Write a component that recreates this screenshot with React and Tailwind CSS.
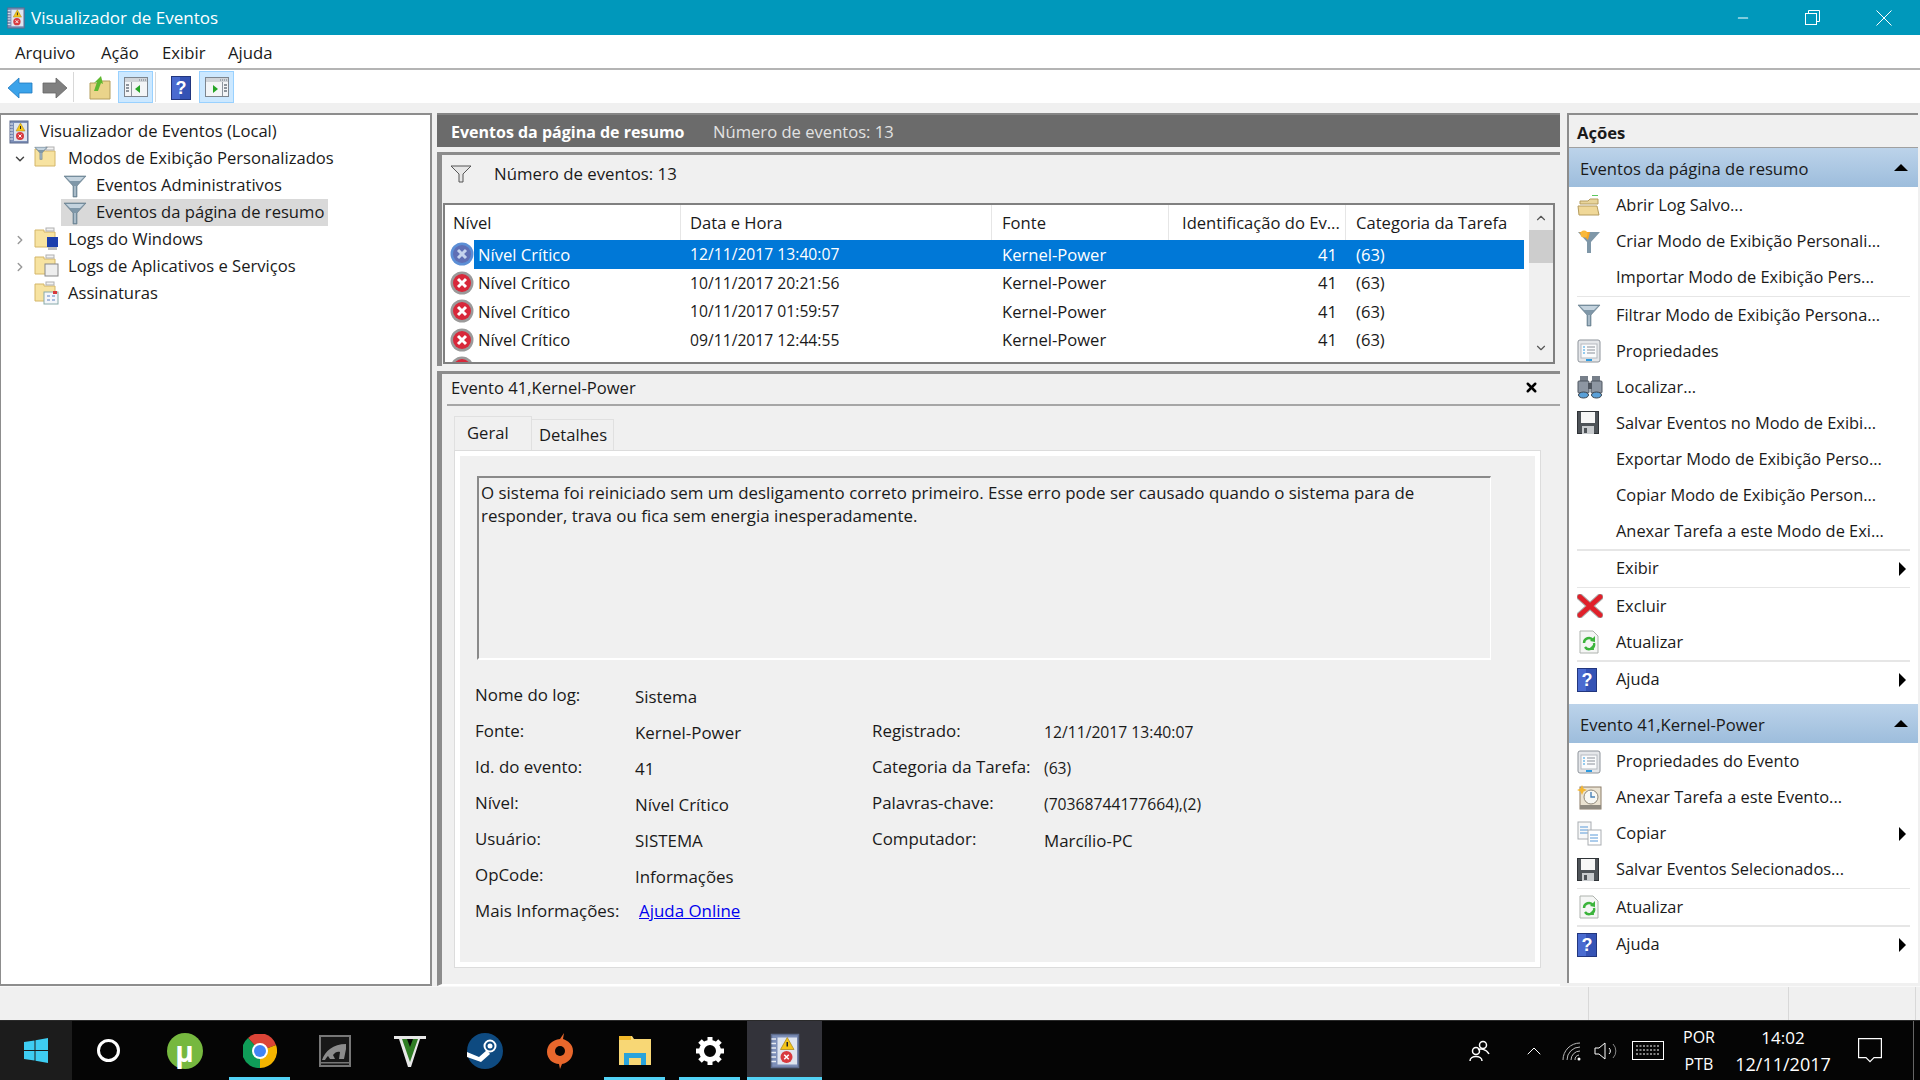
import { ChevronDown, ChevronRight, ChevronUp, X, Minus } from 'lucide-react';

function EventIcon({ size = 22 }) {
    return (
        <svg width={size} height={size} viewBox="0 0 24 24">
            <rect x="3" y="1" width="18" height="22" fill="#7d8fb8" stroke="#5d6b8c" />
            <rect x="7" y="3" width="13" height="18" fill="#dfe5ef" />
            <path d="M3 4h3M3 7h3M3 10h3M3 13h3M3 16h3M3 19h3" stroke="#e8ecf2" strokeWidth="1" />
            <polygon points="13.5,3 18,11 9,11" fill="#f5c518" stroke="#a8861a" strokeWidth="0.5" />
            <rect x="13" y="6" width="1" height="3" fill="#222" />
            <circle cx="13" cy="16" r="4" fill="#d83a3f" />
            <path d="M11.5 14.5l3 3M14.5 14.5l-3 3" stroke="#fff" strokeWidth="1" />
        </svg>
    );
}

function FolderIcon({ children }) {
    return (
        <svg width="25" height="25" viewBox="0 0 25 25" className="shrink-0">
            <path d="M1 3h9v2h11v15H1z" fill="#f7e3a1" stroke="#d4b668" />
            <rect x="12" y="1" width="8" height="3" fill="#f2f2f2" stroke="#b0b0b0" />
            {children}
        </svg>
    );
}

function Funnel({ size = 24, className = '' }) {
    return (
        <svg width={size} height={size} viewBox="0 0 24 24" className={`shrink-0 ${className}`}>
            <polygon points="1,2 23,2 14,12 14,23 10,23 10,12" fill="#7f97a8" stroke="#5f7585" strokeWidth="0.6" />
            <polygon points="3,3 21,3 17,7 7,7" fill="#c4d3de" />
            <rect x="11" y="12" width="2" height="10" fill="#a9bbc8" />
        </svg>
    );
}

function ArrowIcon({ fill, dir }) {
    const pts = dir === 'left' ? '1,12 12,2 12,7 25,7 25,17 12,17 12,22' : '25,12 14,2 14,7 1,7 1,17 14,17 14,22';
    return (
        <svg width="26" height="24" viewBox="0 0 26 24" className="mt-[2px] shrink-0">
            <polygon points={pts} fill={fill} stroke={fill === '#808080' ? '#666' : '#1f78bf'} strokeWidth="0.8" />
        </svg>
    );
}

function ConsoleIcon({ flip }) {
    return (
        <svg width="24" height="20" viewBox="0 0 24 20">
            <rect x="0.5" y="0.5" width="23" height="19" fill="#f3f5f7" stroke="#7d858e" />
            <rect x="1" y="1" width="22" height="4" fill="#d0d4d9" />
            <path d="M15 3h1M17 3h1M19 3h1M21 3h1" stroke="#6d7680" />
            <rect x={flip ? 17 : 7} y="5" width="1" height="14" fill="#8d959e" />
            <path d={flip ? 'M19 8h3M19 11h3M19 14h3' : 'M2 8h3M2 11h3M2 14h3'} stroke="#6d7680" strokeWidth="1.4" />
            <polygon points={flip ? '8,8 13,12 8,16' : '16,8 11,12 16,16'} fill="#27a527" />
        </svg>
    );
}

function HelpIcon({ w = 20, h = 24 }) {
    return (
        <svg width={w} height={h} viewBox="0 0 20 24" className="shrink-0">
            <rect x="0.5" y="0.5" width="19" height="23" fill="#3553b5" stroke="#22367e" />
            <rect x="1" y="1" width="8" height="22" fill="#4a6bd0" />
            <text x="10" y="18" textAnchor="middle" fontSize="18" fontWeight="700" fill="#fff" fontFamily="Liberation Sans, sans-serif">?</text>
        </svg>
    );
}

function ErrorIcon({ selected }) {
    return (
        <svg width="24" height="24" viewBox="0 0 24 24" className="shrink-0">
            <circle cx="12" cy="12" r="11.5" fill={selected ? '#5c8fd6' : '#9a9a9a'} />
            <circle cx="12" cy="12" r="9" fill={selected ? '#5f6fb5' : '#d8283a'} />
            <path d="M8 8l8 8M16 8l-8 8" stroke={selected ? '#c5d3ee' : '#fff'} strokeWidth="3" />
        </svg>
    );
}

function OpenFolderIcon() {
    return (
        <svg width="24" height="24" viewBox="0 0 24 24">
            <rect x="15" y="1" width="6" height="1" fill="#5ec75e" />
            <path d="M3 7h8l2-2h8v5H3z" fill="#e8d49a" stroke="#b59c5e" />
            <path d="M1 12h19l2 9H2z" fill="#f0d898" stroke="#b59c5e" />
        </svg>
    );
}

function PropsIcon() {
    return (
        <svg width="24" height="24" viewBox="0 0 24 24">
            <rect x="1" y="1" width="22" height="22" rx="2" fill="#e5e7ea" stroke="#8e949b" />
            <rect x="4" y="5" width="16" height="14" fill="#fafbfc" stroke="#b5bac0" />
            <path d="M6 8h2M6 11h2M6 14h2" stroke="#2f9be0" />
            <path d="M10 8h8M10 11h8M10 14h8" stroke="#8a9099" />
            <rect x="9" y="20" width="6" height="2" fill="#2f9be0" />
        </svg>
    );
}

function BinocularsIcon() {
    return (
        <svg width="26" height="24" viewBox="0 0 26 24">
            <rect x="3" y="1" width="8" height="6" fill="#777f8a" />
            <rect x="15" y="1" width="8" height="6" fill="#777f8a" />
            <rect x="1" y="6" width="11" height="12" rx="1" fill="#8d96a2" stroke="#4f5660" />
            <rect x="14" y="6" width="11" height="12" rx="1" fill="#8d96a2" stroke="#4f5660" />
            <rect x="11" y="8" width="4" height="6" fill="#4f5660" />
            <ellipse cx="6.5" cy="20" rx="5" ry="3" fill="#5aa0d8" stroke="#3b4550" />
            <ellipse cx="19.5" cy="20" rx="5" ry="3" fill="#5aa0d8" stroke="#3b4550" />
        </svg>
    );
}

function FloppyIcon() {
    return (
        <svg width="22" height="24" viewBox="0 0 22 24">
            <rect x="0.5" y="0.5" width="21" height="22" fill="#4e5358" stroke="#2f3337" />
            <rect x="4" y="1" width="14" height="11" fill="#f7f7f7" />
            <rect x="5" y="15" width="12" height="8" fill="#c8cbce" />
            <rect x="7" y="17" width="3" height="5" fill="#4e5358" />
        </svg>
    );
}

function RedXIcon() {
    return (
        <svg width="26" height="24" viewBox="0 0 26 24">
            <path d="M3 3l20 18M23 3L3 21" stroke="#aaa" strokeWidth="7" strokeLinecap="round" />
            <path d="M3 3l20 18M23 3L3 21" stroke="#e0202a" strokeWidth="5" strokeLinecap="round" />
        </svg>
    );
}

function RefreshIcon() {
    return (
        <svg width="24" height="24" viewBox="0 0 24 24">
            <path d="M3 1h13l5 5v17H3z" fill="#f5f6f5" stroke="#aeb3ae" />
            <path d="M7 13a5 5 0 0 1 9-3M17 13a5 5 0 0 1-9 4" fill="none" stroke="#3cb43c" strokeWidth="2.4" />
            <polygon points="18,6 18,12 13,11" fill="#3cb43c" />
            <polygon points="11,20 17,20 16,15" fill="#3cb43c" />
        </svg>
    );
}

function TaskClockIcon() {
    return (
        <svg width="26" height="26" viewBox="0 0 26 26">
            <rect x="3" y="2" width="21" height="22" fill="#ebe3d2" stroke="#8b7d68" />
            <rect x="3" y="20" width="21" height="4" fill="#8f8a80" />
            <circle cx="14" cy="12" r="7" fill="#f8f8f4" stroke="#90897a" />
            <path d="M14 7v5h4" fill="none" stroke="#4a82b8" strokeWidth="1.4" />
            <polygon points="5,0 6.5,3.5 10,5 6.5,6.5 5,10 3.5,6.5 0,5 3.5,3.5" fill="#f5b731" />
        </svg>
    );
}

function CopyIcon() {
    return (
        <svg width="26" height="26" viewBox="0 0 26 26">
            <rect x="1" y="1" width="13" height="17" fill="#f7f8f9" stroke="#a9adb2" />
            <path d="M3 6h8M3 9h8M3 12h8" stroke="#5a9ad8" />
            <rect x="11" y="9" width="13" height="15" fill="#fff" stroke="#a9adb2" />
            <path d="M13 14h8M13 17h8M13 20h8" stroke="#5a9ad8" />
        </svg>
    );
}

function OrangeFunnelIcon() {
    return (
        <svg width="24" height="24" viewBox="0 0 24 24">
            <polygon points="1,2 23,2 14,12 14,23 10,23 10,12" fill="#7f97a8" />
            <polygon points="2,2 13,2 11,10" fill="#f5a623" />
            <circle cx="7" cy="4" r="3.5" fill="#f9b93a" />
        </svg>
    );
}

const actionsOne = [
    { label: 'Abrir Log Salvo...', icon: <OpenFolderIcon /> },
    { label: 'Criar Modo de Exibição Personali...', icon: <OrangeFunnelIcon /> },
    { label: 'Importar Modo de Exibição Pers...', sep: true },
    { label: 'Filtrar Modo de Exibição Persona...', icon: <Funnel /> },
    { label: 'Propriedades', icon: <PropsIcon /> },
    { label: 'Localizar...', icon: <BinocularsIcon /> },
    { label: 'Salvar Eventos no Modo de Exibi...', icon: <FloppyIcon /> },
    { label: 'Exportar Modo de Exibição Perso...' },
    { label: 'Copiar Modo de Exibição Person...' },
    { label: 'Anexar Tarefa a este Modo de Exi...', sep: true },
    { label: 'Exibir', arrow: true, sep: true },
    { label: 'Excluir', icon: <RedXIcon /> },
    { label: 'Atualizar', icon: <RefreshIcon />, sep: true },
    { label: 'Ajuda', icon: <HelpIcon />, arrow: true },
];

const actionsTwo = [
    { label: 'Propriedades do Evento', icon: <PropsIcon /> },
    { label: 'Anexar Tarefa a este Evento...', icon: <TaskClockIcon /> },
    { label: 'Copiar', icon: <CopyIcon />, arrow: true },
    { label: 'Salvar Eventos Selecionados...', icon: <FloppyIcon />, sep: true },
    { label: 'Atualizar', icon: <RefreshIcon />, sep: true },
    { label: 'Ajuda', icon: <HelpIcon />, arrow: true },
];

function ActionItem({ item }) {
    return (
        <>
            <div className="flex h-[36px] items-center pl-[8px] pr-[12px] text-[16.4px]">
                <div className="flex w-[39px] shrink-0 items-center">{item.icon}</div>
                <span className="flex-1 whitespace-nowrap">{item.label}</span>
                {item.arrow && <span className="h-0 w-0 border-y-[7px] border-l-[7px] border-y-transparent border-l-black" />}
            </div>
            {item.sep && <div className="mx-[8px] h-[1.5px] w-[333px] bg-[#e6e6e6]" />}
        </>
    );
}

function SectionHeader({ title }) {
    return (
        <div className="flex h-[38.5px] items-center justify-between bg-gradient-to-b from-[#bcd3ea] to-[#9dbddc] pl-[11px] pr-[10px] pt-[5px]">
            <span>{title}</span>
            <span className="mb-[5px] h-0 w-0 border-x-[7px] border-b-[7px] border-x-transparent border-b-black" />
        </div>
    );
}

function TreeRow({ indent, chevron, icon, label, selected }) {
    return (
        <div className="flex h-[27px] items-center" style={{ paddingLeft: indent }}>
            {chevron === 'down' && <ChevronDown size={14} strokeWidth={2.5} className="mr-[5px] text-[#444]" />}
            {chevron === 'right' && <ChevronRight size={14} strokeWidth={2.5} className="mr-[5px] text-[#999]" />}
            <div className={`flex h-[27px] items-center pl-[2px] pr-[4px] ${selected ? 'bg-[#d9d9d9]' : ''}`}>
                {icon}
                <span className="ml-[9px] whitespace-nowrap">{label}</span>
            </div>
        </div>
    );
}

function EventRow({ date, selected }) {
    return (
        <div className="flex h-[28.5px] items-center">
            <div className="flex h-full w-[29px] shrink-0 items-center pl-[5px]">
                <ErrorIcon selected={selected} />
            </div>
            <div className={`flex h-full flex-1 items-center pt-[2px] ${selected ? 'bg-[#0078d7] text-white' : ''}`}>
                <span className="w-[207px] pl-[4px]">Nível Crítico</span>
                <span className="w-[311px] pl-[9px] text-[15.7px]">{date}</span>
                <span className="w-[177px] pl-[10px]">Kernel-Power</span>
                <span className="w-[177px] pr-[9px] text-right">41</span>
                <span className="w-[149px] pl-[10px]">(63)</span>
            </div>
        </div>
    );
}

const details = [
    ['Nome do log:', 'Sistema', '', ''],
    ['Fonte:', 'Kernel-Power', 'Registrado:', '12/11/2017 13:40:07'],
    ['Id. do evento:', '41', 'Categoria da Tarefa:', '(63)'],
    ['Nível:', 'Nível Crítico', 'Palavras-chave:', '(70368744177664),(2)'],
    ['Usuário:', 'SISTEMA', 'Computador:', 'Marcílio-PC'],
    ['OpCode:', 'Informações', '', ''],
];

function TaskIcon({ children, active, underline }) {
    return (
        <div className={`relative flex h-full w-[75px] shrink-0 items-center justify-center ${active ? 'bg-[#33333a]' : ''}`}>
            {children}
            {underline && <div className={`absolute bottom-0 h-[3px] bg-[#52d2f5] ${active ? 'inset-x-0' : 'inset-x-[7px]'}`} />}
        </div>
    );
}

export default function App() {
    return (
        <div className="flex h-screen w-[1920px] flex-col overflow-hidden bg-[#f0f0f0] font-['Open_Sans','Noto_Sans',sans-serif] text-[16.6px] text-[#1a1a1a]">
            {/* title bar */}
            <div className="flex h-[35px] shrink-0 items-center bg-[#0098bb] pl-[5px] text-[17px] text-white">
                <EventIcon />
                <span className="ml-[4px]">Visualizador de Eventos</span>
                <div className="ml-auto flex items-center pr-[28px]">
                    <Minus size={16} strokeWidth={1.6} className="mr-[54px]" />
                    <svg width="15" height="15" viewBox="0 0 15 15" className="mr-[56px]" fill="none" stroke="#fff">
                        <rect x="0.5" y="3.5" width="11" height="11" />
                        <path d="M3.5 3V0.5h11v11H12" />
                    </svg>
                    <svg width="16" height="16" viewBox="0 0 16 16" stroke="#fff"><path d="M0.5 0.5l15 15M15.5 0.5l-15 15" /></svg>
                </div>
            </div>

            {/* menu */}
            <div className="flex h-[35px] shrink-0 items-center border-b-2 border-[#b4b4b4] bg-white pl-[15px] pt-[2px] text-[16.7px]">
                <span className="w-[86px]">Arquivo</span>
                <span className="w-[61px]">Ação</span>
                <span className="w-[66px]">Exibir</span>
                <span>Ajuda</span>
            </div>

            {/* toolbar */}
            <div className="flex h-[33px] shrink-0 items-center bg-white pl-[7px]">
                <ArrowIcon fill="#3ba3ea" dir="left" />
                <div className="ml-[9px]"><ArrowIcon fill="#808080" dir="right" /></div>
                <div className="ml-[5px] h-[30px] w-px bg-[#d8d8d8]" />
                <svg width="22" height="26" viewBox="0 0 22 26" className="ml-[15px] mt-[2px]">
                    <path d="M1 8h9V6h11v18H1z" fill="#ead48b" stroke="#b49e5c" />
                    <path d="M5 16l3-9-3 1 7-7 2 8-2-1-3 8z" fill="#5fb82f" />
                </svg>
                <div className="ml-[7px] flex h-[32px] w-[35px] items-center justify-center border border-[#99d1ff] bg-[#cce8ff]"><ConsoleIcon /></div>
                <div className="ml-[2px] h-[30px] w-px bg-[#d8d8d8]" />
                <div className="ml-[15px] mt-[2px]"><HelpIcon /></div>
                <div className="ml-[8px] flex h-[32px] w-[35px] items-center justify-center border border-[#99d1ff] bg-[#cce8ff]"><ConsoleIcon flip /></div>
            </div>

            {/* panes */}
            <div className="flex min-h-0 flex-1 pt-[10px]">
                <div className="w-[432px] shrink-0 border-y-2 border-l border-r-2 border-[#8d8d8d] bg-white pt-[3px]">
                    <TreeRow indent={4} icon={<EventIcon size={24} />} label="Visualizador de Eventos (Local)" />
                    <TreeRow indent={12} chevron="down" icon={<FolderIcon><Funnel size={14} /></FolderIcon>} label="Modos de Exibição Personalizados" />
                    <TreeRow indent={60} icon={<Funnel />} label="Eventos Administrativos" />
                    <TreeRow indent={60} icon={<Funnel />} label="Eventos da página de resumo" selected />
                    <TreeRow indent={12} chevron="right" icon={<FolderIcon><rect x="13" y="10" width="11" height="10" fill="#1c3fae" /><rect x="14" y="20" width="9" height="3" fill="#bbb" /></FolderIcon>} label="Logs do Windows" />
                    <TreeRow indent={12} chevron="right" icon={<FolderIcon><rect x="11" y="10" width="13" height="12" fill="#eee" stroke="#888" /></FolderIcon>} label="Logs de Aplicativos e Serviços" />
                    <TreeRow indent={31} icon={<FolderIcon><rect x="10" y="11" width="14" height="12" fill="#f4f6fa" stroke="#8aa" /><path d="M13 15h3M18 15h3M13 19h3M18 19h3" stroke="#5a80c0" /><rect x="19" y="10" width="4" height="3" fill="#d8383c" /></FolderIcon>} label="Assinaturas" />
                </div>

                <div className="ml-[5px] flex w-[1123px] shrink-0 flex-col">
                    <div className="flex h-[34px] shrink-0 items-center border-t-2 border-[#858585] bg-[#6b6b6b] pl-[14px] pt-[2px]">
                        <span className="w-[262px] text-[16px] font-bold text-white">Eventos da página de resumo</span>
                        <span className="text-[#e2e2e2]">Número de eventos: 13</span>
                    </div>

                    <div className="mt-[5px] h-[214px] shrink-0 border-l-[5px] border-t-[3px] border-[#8c8c8c] pl-[1px]">
                        <div className="flex h-[48px] items-start pl-[7px] pt-[10px]">
                            <svg width="22" height="18" viewBox="0 0 22 18" fill="none" stroke="#555">
                                <path d="M1 1h20l-8 8v8h-4V9z" fill="#e6e6e6" />
                            </svg>
                            <span className="ml-[22px] text-[16.8px] leading-[18px]">Número de eventos: 13</span>
                        </div>
                        <div className="flex h-[161px] w-[1112px] border-2 border-[#808080] bg-white">
                            <div className="w-[1079px] shrink-0 overflow-hidden">
                                <div className="flex h-[35px] items-center">
                                    <span className="flex h-full w-[236px] items-center border-r border-[#e6e6e6] pl-[8px] pt-[2px]">Nível</span>
                                    <span className="flex h-full w-[311px] items-center border-r border-[#e6e6e6] pl-[9px] pt-[2px]">Data e Hora</span>
                                    <span className="flex h-full w-[177px] items-center border-r border-[#e6e6e6] pl-[10px] pt-[2px]">Fonte</span>
                                    <span className="flex h-full w-[177px] items-center border-r border-[#e6e6e6] pl-[13px] pt-[2px] whitespace-nowrap">Identificação do Ev...</span>
                                    <span className="flex h-full w-[178px] items-center pl-[10px] pt-[2px]">Categoria da Tarefa</span>
                                </div>
                                <EventRow date="12/11/2017 13:40:07" selected />
                                <EventRow date="10/11/2017 20:21:56" />
                                <EventRow date="10/11/2017 01:59:57" />
                                <EventRow date="09/11/2017 12:44:55" />
                                <div className="pl-[5px] pt-[2px]"><ErrorIcon /></div>
                            </div>
                            <div className="ml-[5px] flex w-[24px] flex-col items-center bg-[#f0f0f0]">
                                <ChevronUp size={14} className="mt-[6px] text-[#555]" />
                                <div className="mt-[5px] h-[33px] w-full bg-[#cdcdcd]" />
                                <ChevronDown size={14} className="mt-[78px] text-[#555]" />
                            </div>
                        </div>
                    </div>

                    <div className="mt-[5px] flex min-h-0 flex-1 flex-col border-b-2 border-l-[5px] border-t-[3px] border-b-white border-l-[#8c8c8c] border-t-[#8c8c8c] pl-[5px]">
                        <div className="flex h-[32px] shrink-0 items-center justify-between border-b-2 border-[#a6a6a6] pl-[4px] pr-[16px]">
                            <span className="pb-[2px]">Evento 41,Kernel-Power</span>
                            <X size={15} strokeWidth={4} className="mb-[3px] mr-[5px] text-black" />
                        </div>
                        <div className="ml-[7px] mt-[10px] flex h-[34px] shrink-0 items-end">
                            <div className="flex h-[34px] w-[78px] items-center border-x border-t border-[#e0e0e0] pl-[12px]">Geral</div>
                            <div className="flex h-[31px] w-[82px] items-center border-r border-t border-[#e0e0e0] pl-[7px]">Detalhes</div>
                        </div>
                        <div className="ml-[7px] h-[518px] w-[1087px] shrink-0 border border-[#dcdcdc]">
                            <div className="h-full border-[5px] border-white pl-[17px] pt-[20px] text-[16.9px]">
                                <div className="h-[184px] w-[1014px] border-y-2 border-l-2 border-r border-b-white border-l-[#8a8a8a] border-r-white border-t-[#8a8a8a] px-[2px] pt-[3px] leading-[23px]">
                                    O sistema foi reiniciado sem um desligamento correto primeiro. Esse erro pode ser causado quando o sistema para de<br />
                                    responder, trava ou fica sem energia inesperadamente.
                                </div>
                                <div className="ml-[-2px] mt-[17px] grid grid-cols-[160px_237px_172px_1fr]">
                                    {details.flat().map((t, i) => (
                                        <div key={i} className={`flex h-[36px] items-center whitespace-nowrap ${i % 2 ? 'pt-[3px]' : ''} ${t.includes('(') || t.includes('/') ? 'text-[15.7px]' : ''}`}>{t}</div>
                                    ))}
                                    <div className="flex h-[36px] items-center">Mais Informações:</div>
                                    <div className="col-span-3 flex h-[36px] items-center pl-[4px]">
                                        <a href="#" className="text-[#0000ee] underline">Ajuda Online</a>
                                    </div>
                                </div>
                            </div>
                        </div>
                    </div>
                </div>

                <div className="ml-[7px] h-[870px] w-[351px] shrink-0 border-l-2 border-t-2 border-[#8d8d8d] bg-white">
                    <div className="flex h-[33px] items-center border-b border-[#a0a0a0] bg-[#f0f0f0] pl-[8px] pt-[4px] font-bold">Ações</div>
                    <SectionHeader title="Eventos da página de resumo" />
                    <div className="h-px" />
                    {actionsOne.map((a) => <ActionItem key={a.label} item={a} />)}
                    <div className="h-[6.5px]" />
                    <SectionHeader title="Evento 41,Kernel-Power" />
                    <div className="h-px" />
                    {actionsTwo.map((a) => <ActionItem key={a.label} item={a} />)}
                </div>
            </div>

            {/* status bar */}
            <div className="flex h-[34px] shrink-0 border-t border-[#f8f8f8]">
                <div className="w-[1589px] border-r border-[#d8d8d8]" />
                <div className="w-[200px] border-r border-[#d8d8d8]" />
                <div className="w-[127px] border-r border-[#d8d8d8]" />
            </div>

            {/* taskbar */}
            <div className="flex h-[60px] shrink-0 items-center border-t border-[#2a2a2a] bg-[#050505] text-white">
                <div className="flex h-full w-[72px] items-center justify-center bg-[#1c1c1c]">
                    <svg width="24" height="25" viewBox="0 0 24 25" fill="#3ecdf2">
                        <polygon points="0,4 10.5,2.5 10.5,12 0,12" />
                        <polygon points="11.5,2.3 24,0 24,12 11.5,12" />
                        <polygon points="0,13 10.5,13 10.5,22.5 0,21" />
                        <polygon points="11.5,13 24,13 24,25 11.5,22.8" />
                    </svg>
                </div>
                <div className="flex h-full w-[75px] items-center justify-center pr-[3px]">
                    <div className="h-[23px] w-[23px] rounded-full border-[3px] border-white" />
                </div>
                <TaskIcon>
                    <div className="flex h-[36px] w-[36px] items-center justify-center rounded-full bg-[#76b83f] text-[28px] font-bold leading-none text-white">µ</div>
                </TaskIcon>
                <TaskIcon underline>
                    <svg width="34" height="34" viewBox="0 0 34 34">
                        <path d="M17 17L5 4A17 17 0 0 1 33 11z" fill="#db4437" />
                        <path d="M17 17L33 11A17 17 0 0 1 17 34z" fill="#f4b400" />
                        <path d="M17 17L17 34A17 17 0 0 1 5 4z" fill="#0f9d58" />
                        <circle cx="17" cy="17" r="8" fill="#fff" />
                        <circle cx="17" cy="17" r="6" fill="#4285f4" />
                    </svg>
                </TaskIcon>
                <TaskIcon>
                    <svg width="32" height="32" viewBox="0 0 32 32">
                        <rect x="1" y="1" width="30" height="30" fill="#181818" stroke="#777" strokeWidth="2" />
                        <rect x="1" y="27" width="30" height="1.5" fill="#777" />
                        <path d="M3 25C6 16 14 9 27 9v5l-2 10h-5l1-7c-2-1-5 0-7 3l2 4h-5l-2-3c-1 1-2 2-3 4z" fill="#8c8c8c" />
                    </svg>
                </TaskIcon>
                <TaskIcon>
                    <svg width="34" height="34" viewBox="0 0 34 34">
                        <polygon points="1,2 33,2 33,5 27,5 18,33 15,33 6,5 1,5" fill="#e8e8e8" />
                        <polygon points="9,5 25,5 17,28" fill="#2f7d24" />
                        <polygon points="14,5 20,5 17,13" fill="#050505" />
                    </svg>
                </TaskIcon>
                <TaskIcon>
                    <svg width="36" height="36" viewBox="0 0 36 36">
                        <circle cx="18" cy="18" r="18" fill="#0e4a80" />
                        <circle cx="23" cy="13" r="5.5" fill="none" stroke="#fff" strokeWidth="2" />
                        <circle cx="23" cy="13" r="2.5" fill="#fff" />
                        <path d="M0 19l12 5 8-7 3 4-9 8-14-5z" fill="#fff" />
                    </svg>
                </TaskIcon>
                <TaskIcon>
                    <svg width="28" height="36" viewBox="0 0 28 36">
                        <path d="M14 6C6 7 1 12 1 19s6 12 12 12l1 5 2-5c6-1 11-6 11-13S22 8 17 6l1-6z" fill="#e8672c" />
                        <circle cx="14" cy="18" r="5" fill="#050505" />
                    </svg>
                </TaskIcon>
                <TaskIcon underline>
                    <svg width="34" height="30" viewBox="0 0 34 30">
                        <path d="M1 0h13l2 3h17v26H1z" fill="#f8d775" />
                        <rect x="1" y="0" width="12" height="4" fill="#f2b92b" />
                        <path d="M6 29V17h22v12h-5v-7H11v7z" fill="#29a3dc" />
                    </svg>
                </TaskIcon>
                <TaskIcon underline>
                    <svg width="28" height="28" viewBox="0 0 28 28">
                        <circle cx="14" cy="14" r="8.5" fill="none" stroke="#fff" strokeWidth="5" />
                        <path d="M14 0v6M14 22v6M0 14h6M22 14h6M4 4l4 4M20 20l4 4M24 4l-4 4M8 20l-4 4" stroke="#fff" strokeWidth="5" />
                    </svg>
                </TaskIcon>
                <TaskIcon active underline>
                    <EventIcon size={36} />
                </TaskIcon>

                <div className="ml-auto flex h-full items-center">
                    <svg width="22" height="22" viewBox="0 0 22 22" fill="none" stroke="#fff" strokeWidth="1.5">
                        <circle cx="14" cy="5" r="3.5" /><path d="M9 10c2-1.5 8-1.5 11 4" />
                        <circle cx="7" cy="11" r="3.5" /><path d="M1 21c0-6 12-6 12 0" />
                    </svg>
                    <ChevronUp size={24} strokeWidth={1} className="ml-[31px]" />
                    <svg width="20" height="20" viewBox="0 0 20 20" fill="none" stroke="#bbb" strokeWidth="1" className="ml-[16px]">
                        <path d="M1 19A17 17 0 0 1 18 2M5 19A13 13 0 0 1 18 6M9 19A9 9 0 0 1 18 10M13 19a5 5 0 0 1 4-5" />
                        <circle cx="17" cy="18" r="1.5" fill="#fff" stroke="none" />
                    </svg>
                    <svg width="24" height="20" viewBox="0 0 24 20" fill="none" stroke="#fff" strokeWidth="1" className="ml-[12px]">
                        <path d="M1 7h4l6-5v16l-6-5H1z" /><path d="M15 7a4 4 0 0 1 0 6" /><path d="M19 3a10 10 0 0 1 0 14" stroke="#888" />
                    </svg>
                    <svg width="32" height="19" viewBox="0 0 32 19" fill="none" stroke="#fff" className="ml-[14px]">
                        <rect x="0.5" y="0.5" width="31" height="18" />
                        <path d="M4 5h24M4 9h24M4 13h24" strokeDasharray="2 1.5" />
                    </svg>
                    <div className="ml-[17px] flex w-[36px] flex-col items-center gap-[8px] text-[16px] leading-[19px]">
                        <span>POR</span><span>PTB</span>
                    </div>
                    <div className="ml-[16px] flex w-[100px] flex-col items-center gap-[8px] text-[17px] leading-[19px]">
                        <span>14:02</span><span className="text-[18px]">12/11/2017</span>
                    </div>
                    <svg width="24" height="25" viewBox="0 0 24 25" fill="none" stroke="#fff" strokeWidth="1.2" className="ml-[25px]">
                        <path d="M0.6 0.6h22.8v19H16l-4 4-4-4H0.6z" />
                    </svg>
                    <div className="ml-[31px] h-full w-[1px] bg-[#666]" />
                    <div className="w-[6px]" />
                </div>
            </div>
        </div>
    );
}
